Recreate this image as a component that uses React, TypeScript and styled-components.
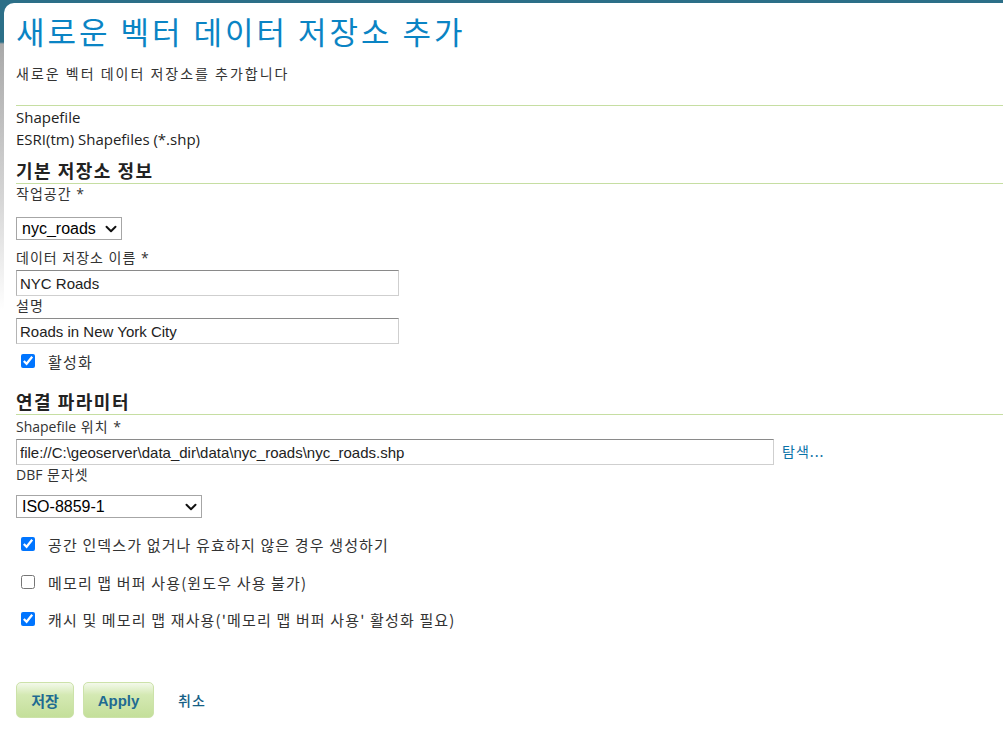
import React, { useState } from 'react';
import styled, { createGlobalStyle } from 'styled-components';
import { ChevronDown } from 'lucide-react';

const GlobalStyle = createGlobalStyle`
  html, body {
    margin: 0;
    padding: 0;
    background: #fff;
  }
  body {
    font-family: "Open Sans", "Noto Sans CJK KR", sans-serif;
    color: #333;
  }
`;

const Frame = styled.div`
  min-height: 731px;
  padding: 3px 0 0 4px;
  box-sizing: border-box;
  background: linear-gradient(
    to bottom,
    #2c6f88 0,
    #2c6f88 42px,
    #a9a9a9 44px,
    #d6d6d6 200px,
    #ffffff 310px
  );
`;

const Panel = styled.div`
  background: #fff;
  border-top-left-radius: 10px;
  min-height: 728px;
  padding: 8px 0 0 12px;
  box-sizing: border-box;
`;

const Title = styled.h1`
  margin: 0;
  font-family: "Noto Sans CJK KR", sans-serif;
  font-weight: normal;
  font-size: 31px;
  line-height: 40px;
  letter-spacing: 3px;
  color: #0a84c4;
`;

const Subtitle = styled.p`
  margin: 12px 0 0;
  font-family: "Noto Sans CJK KR", sans-serif;
  font-size: 14px;
  line-height: 20px;
  letter-spacing: 2px;
  color: #333;
`;

const Divider = styled.div`
  margin-top: 22px;
  border-top: 1px solid #c6dea2;
`;

const InfoLine = styled.div`
  font-size: 15px;
  line-height: 22px;
  color: #222;
`;

const SectionTitle = styled.h2<{ $gap: number }>`
  margin: ${({ $gap }) => $gap}px 0 0;
  padding-bottom: 1px;
  border-bottom: 1px solid #c6dea2;
  font-family: "Noto Sans CJK KR", sans-serif;
  font-weight: bold;
  font-size: 18px;
  line-height: 24px;
  letter-spacing: 1.5px;
  color: #222;
`;

const Label = styled.div<{ $gap?: number }>`
  margin-top: ${({ $gap = 0 }) => $gap}px;
  font-size: 14px;
  line-height: 20px;
  letter-spacing: 1px;
  color: #333;
`;

const Latin = styled.span`
  letter-spacing: 0;
`;

const SelectWrap = styled.div<{ $gap: number; $width: number }>`
  position: relative;
  margin-top: ${({ $gap }) => $gap}px;
  width: ${({ $width }) => $width}px;
  height: 23px;

  svg {
    position: absolute;
    right: 2px;
    top: 3px;
    pointer-events: none;
    color: #111;
  }
`;

const Select = styled.select`
  display: block;
  box-sizing: border-box;
  width: 100%;
  height: 100%;
  appearance: none;
  font-family: "Liberation Sans", Arial, sans-serif;
  font-size: 16px;
  color: #000;
  background: #fff;
  border: 1px solid #a6a6a6;
  border-radius: 0;
  padding: 0 20px 0 5px;
  outline: none;
`;

const TextInput = styled.input<{ $width: number }>`
  display: block;
  box-sizing: border-box;
  width: ${({ $width }) => $width}px;
  height: 26px;
  margin-top: 2px;
  padding: 1px 3px 0;
  font-family: "Liberation Sans", Arial, sans-serif;
  font-size: 15px;
  color: #222;
  border: 1px solid #cfcfcf;
  border-top-color: #8a8a8a;
  border-left-color: #b4b4b4;
  outline: none;
`;

const InputRow = styled.div`
  display: flex;
  align-items: center;
  gap: 8px;
`;

const BrowseLink = styled.a`
  font-family: "Noto Sans CJK KR", sans-serif;
  font-size: 14px;
  letter-spacing: 1px;
  color: #0a73a8;
  text-decoration: none;
  cursor: pointer;
`;

const CheckRow = styled.label<{ $gap: number }>`
  display: flex;
  align-items: center;
  margin-top: ${({ $gap }) => $gap}px;
  height: 20px;
  font-family: "Noto Sans CJK KR", sans-serif;
  font-size: 15px;
  letter-spacing: 1.15px;
  color: #333;
  cursor: pointer;
`;

const CheckBox = styled.input`
  width: 14px;
  height: 14px;
  margin: 0 13px 0 5px;
  accent-color: #0075ff;
`;

const Actions = styled.div`
  display: flex;
  align-items: center;
  gap: 9px;
  margin-top: 53px;
`;

const ActionButton = styled.button<{ $width: number }>`
  width: ${({ $width }) => $width}px;
  height: 36px;
  border: 1px solid #cce2a9;
  border-radius: 5px;
  background: linear-gradient(to bottom, #f3f9ea 0%, #d4e9b3 35%, #c4df9a 100%);
  font-family: "Liberation Sans", "Noto Sans CJK KR", sans-serif;
  font-weight: bold;
  font-size: 15px;
  color: #1f6b92;
  cursor: pointer;
`;

const CancelLink = styled.a`
  margin-left: 15px;
  font-family: "Noto Sans CJK KR", sans-serif;
  font-size: 14px;
  font-weight: 500;
  letter-spacing: 1px;
  color: #175f86;
  text-decoration: none;
  cursor: pointer;
`;

export default function App() {
  const [name, setName] = useState('NYC Roads');
  const [description, setDescription] = useState('Roads in New York City');
  const [url, setUrl] = useState('file://C:\\geoserver\\data_dir\\data\\nyc_roads\\nyc_roads.shp');
  const [flags, setFlags] = useState({
    enabled: true,
    spatialIndex: true,
    memoryMapped: false,
    cacheReuse: true,
  });

  const toggle = (key: keyof typeof flags) => () => setFlags((f) => ({ ...f, [key]: !f[key] }));

  return (
    <>
      <GlobalStyle />
      <Frame>
        <Panel>
          <Title>새로운 벡터 데이터 저장소 추가</Title>
          <Subtitle>새로운 벡터 데이터 저장소를 추가합니다</Subtitle>
          <Divider />
          <InfoLine>Shapefile</InfoLine>
          <InfoLine>ESRI(tm) Shapefiles (*.shp)</InfoLine>

          <SectionTitle $gap={8}>기본 저장소 정보</SectionTitle>
          <Label>작업공간 *</Label>
          <SelectWrap $gap={13} $width={106}>
            <Select defaultValue="nyc_roads">
              <option value="nyc_roads">nyc_roads</option>
            </Select>
            <ChevronDown size={18} strokeWidth={2.6} />
          </SelectWrap>
          <Label $gap={8}>데이터 저장소 이름 *</Label>
          <TextInput $width={383} value={name} onChange={(e) => setName(e.target.value)} />
          <Label>설명</Label>
          <TextInput $width={383} value={description} onChange={(e) => setDescription(e.target.value)} />
          <CheckRow $gap={7}>
            <CheckBox type="checkbox" checked={flags.enabled} onChange={toggle('enabled')} />
            활성화
          </CheckRow>

          <SectionTitle $gap={18}>연결 파라미터</SectionTitle>
          <Label $gap={2}><Latin>Shapefile</Latin> 위치 *</Label>
          <InputRow>
            <TextInput $width={758} value={url} onChange={(e) => setUrl(e.target.value)} />
            <BrowseLink>탐색...</BrowseLink>
          </InputRow>
          <Label><Latin>DBF</Latin> 문자셋</Label>
          <SelectWrap $gap={10} $width={186}>
            <Select defaultValue="ISO-8859-1">
              <option value="ISO-8859-1">ISO-8859-1</option>
              <option value="UTF-8">UTF-8</option>
            </Select>
            <ChevronDown size={18} strokeWidth={2.6} />
          </SelectWrap>

          <CheckRow $gap={16}>
            <CheckBox type="checkbox" checked={flags.spatialIndex} onChange={toggle('spatialIndex')} />
            공간 인덱스가 없거나 유효하지 않은 경우 생성하기
          </CheckRow>
          <CheckRow $gap={18}>
            <CheckBox type="checkbox" checked={flags.memoryMapped} onChange={toggle('memoryMapped')} />
            메모리 맵 버퍼 사용(윈도우 사용 불가)
          </CheckRow>
          <CheckRow $gap={17}>
            <CheckBox type="checkbox" checked={flags.cacheReuse} onChange={toggle('cacheReuse')} />
            캐시 및 메모리 맵 재사용('메모리 맵 버퍼 사용' 활성화 필요)
          </CheckRow>

          <Actions>
            <ActionButton $width={58}>저장</ActionButton>
            <ActionButton $width={71}>Apply</ActionButton>
            <CancelLink>취소</CancelLink>
          </Actions>
        </Panel>
      </Frame>
    </>
  );
}
